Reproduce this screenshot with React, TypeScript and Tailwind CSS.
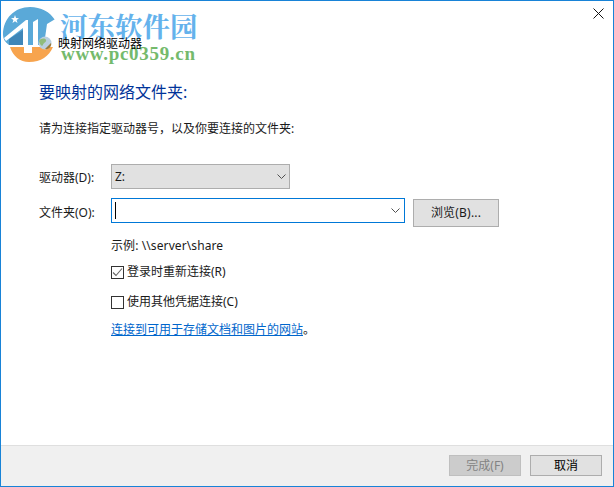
const ui = 'font-["Noto_Sans","Noto_Sans_CJK_SC",sans-serif]';

function Logo() {
  return (
    <div className="absolute left-0 top-0 h-[66px] w-[200px]">
      <svg width="62" height="64" viewBox="0 0 62 64" className="absolute left-0 top-0">
        {/* blue dome */}
        <path d="M2 34 C2 17 14 6 29 6 C40 6 49 11 54 19 L46 24 L46 44 L8 44 C4 41 2 38 2 34 Z" fill="#5aa9d8" />
        <path d="M8 38 L22 29 L22 44 L8 44 Z" fill="#3f86b8" />
        {/* white house strokes */}
        <path d="M3 37 L25 19 L27 19 L27 44 L22 44 L22 27 L5 40 Z" fill="#ffffff" />
        <path d="M32 21 L37 18 L37 44 L32 44 Z" fill="#ffffff" />
        <path d="M46 23 L56 17 L50 26 L46 44 L43 44 Z" fill="#ffffff" />
        {/* orange base */}
        <path d="M9 46 L23 46 L23 52 L31 52 L31 46 L52 46 C48 55 40 61 28 61 C19 61 12 55 9 46 Z" fill="#f7a44e" />
        <path d="M14 14 l1 3 3 .2 -2.4 1.9 .9 2.9 -2.5 -1.7 -2.5 1.7 .9 -2.9 -2.4 -1.9 3 -.2 z" fill="#ffffff" />
      </svg>
      <div className='absolute left-[59px] top-[7px] font-["Noto_Serif_CJK_SC","Noto_Sans_CJK_SC",serif] text-[27.5px] leading-[34px] font-bold whitespace-nowrap text-[#64b2ec]'>
        河东软件园
      </div>
      <div className='absolute left-[60px] top-[41px] font-["Liberation_Serif",serif] text-[19px] leading-[24px] font-bold tracking-[0.7px] whitespace-nowrap text-[#74ba6c]'>
        www.pc0359.cn
      </div>
    </div>
  );
}

function Chevron({ color = '#505050' }: { color?: string }) {
  return (
    <svg width="9" height="5" viewBox="0 0 9 5" fill="none" className="block">
      <path d="M0.5 0.5 L4.5 4.5 L8.5 0.5" stroke={color} strokeWidth="1" />
    </svg>
  );
}

function Check({ checked }: { checked?: boolean }) {
  return (
    <span className="flex h-[13px] w-[13px] shrink-0 items-center justify-center border border-[#333333] bg-white">
      {checked && (
        <svg width="11" height="11" viewBox="0 0 11 11" fill="none">
          <path d="M1 5.5 L4 8.5 L10 1.5" stroke="#666666" strokeWidth="1.1" />
        </svg>
      )}
    </span>
  );
}

export default function App() {
  return (
    <div className={`${ui} relative flex h-[487px] w-[614px] flex-col border border-[#1883d7] bg-white text-[12px] leading-[16px] text-[#1a1a1a]`}>
      <Logo />
      {/* title bar */}
      <div className="relative flex h-[46px] items-start justify-end">
        <button className="mt-[6px] mr-[9px] flex h-[12px] w-[12px] items-center justify-center">
          <svg width="11" height="11" viewBox="0 0 11 11" fill="none">
            <path d="M0.5 0.5 L10.5 10.5 M10.5 0.5 L0.5 10.5" stroke="#111111" strokeWidth="1" />
          </svg>
        </button>
        <div className="absolute left-[37px] top-[33px] flex items-center gap-[6px]">
          <svg width="14" height="14" viewBox="0 0 14 14">
            <circle cx="7" cy="7" r="6.5" fill="#b9cfe0" />
            <path d="M1 5 C3 2 7 2 8 4 C9 6 5 7 5 9 C4 11 2 9 1 5 Z" fill="#8fbc7c" />
            <path d="M7 13 L13 7 C14 10 11 14 7 13 Z" fill="#9a7a3a" />
          </svg>
          <span className="mt-[2px] text-[12px] leading-[16px] text-black">映射网络驱动器</span>
        </div>
      </div>

      {/* content */}
      <div className="flex flex-1 flex-col pl-[38px]">
        <h1 className="mt-[34px] text-[16px] leading-[22px] font-normal text-[#003399]">要映射的网络文件夹:</h1>
        <p className="mt-[18px]">请为连接指定驱动器号，以及你要连接的文件夹:</p>

        <div className="mt-[27px] flex items-start">
          <span className="mt-[6px] w-[72px]">驱动器(D):</span>
          <div className="flex h-[25px] w-[179px] items-center justify-between border border-[#adadad] bg-[#e1e1e1] pr-[3px] pl-[3px]">
            <span>Z:</span>
            <Chevron />
          </div>
        </div>

        <div className="mt-[9px] flex items-start">
          <span className="mt-[7px] w-[72px]">文件夹(O):</span>
          <div className="flex h-[25px] w-[294px] items-center justify-between border border-[#0078d7] bg-white pr-[4px] pl-[3px]">
            <span className="h-[17px] w-px bg-black" />
            <Chevron />
          </div>
          <button className="mt-px ml-[8px] flex h-[28px] w-[86px] items-center justify-center border border-[#adadad] bg-[#e1e1e1] tracking-[0.2px]">
            浏览(B)...
          </button>
        </div>

        <div className="mt-[11px] ml-[72px] flex flex-col">
          <span className="tracking-[0.1px]">示例: \\server\share</span>
          <label className="mt-[10px] flex items-center gap-[3px]">
            <Check checked />
            <span>登录时重新连接(R)</span>
          </label>
          <label className="mt-[14px] flex items-center gap-[3px]">
            <Check />
            <span>使用其他凭据连接(C)</span>
          </label>
          <span className="mt-[12px]">
            <a className="text-[#0066cc] underline">连接到可用于存储文档和图片的网站</a>。
          </span>
        </div>
      </div>

      {/* footer */}
      <div className="flex h-[41px] items-start justify-end gap-[9px] border-t border-[#dfdfdf] bg-[#f0f0f0] pt-[9px] pr-[11px]">
        <button className="flex h-[21px] w-[72px] items-center justify-center border border-[#bfbfbf] bg-[#cccccc] pt-px text-[#838383]">
          完成(F)
        </button>
        <button className="flex h-[21px] w-[72px] items-center justify-center border border-[#adadad] bg-[#e1e1e1] pt-px text-black">
          取消
        </button>
      </div>
    </div>
  );
}
